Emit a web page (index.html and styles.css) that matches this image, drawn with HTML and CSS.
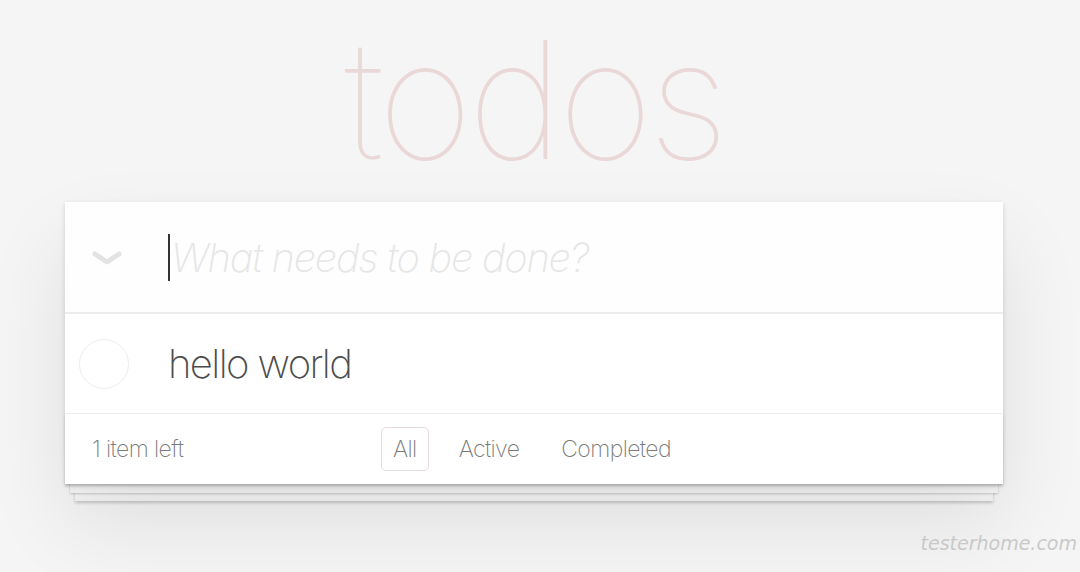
FILE: index.html
```html
<!DOCTYPE html>
<html lang="en">
<head>
  <meta charset="UTF-8">
  <meta name="viewport" content="width=device-width, initial-scale=1.0">
  <title>TodoMVC</title>
  <link rel="stylesheet" href="styles.css">
</head>
<body>
  <section class="todoapp">
    <h1>todos</h1>
    <div class="main">
      <header class="header">
        <span class="toggle-all">
          <svg width="30" height="16" viewBox="0 0 30 16">
            <polyline points="3,4 15,12 27,4" fill="none" stroke="#e3e3e3" stroke-width="5" stroke-linecap="round" stroke-linejoin="round"/>
          </svg>
        </span>
        <div class="new-todo">
          <span class="caret"></span>
          <span class="placeholder">What needs to be done?</span>
        </div>
      </header>

      <ul class="todo-list">
        <li>
          <span class="toggle"></span>
          <label>hello world</label>
        </li>
      </ul>

      <footer class="footer">
        <span class="todo-count">1 item left</span>
        <ul class="filters">
          <li><a class="selected" href="#/">All</a></li>
          <li><a href="#/active">Active</a></li>
          <li><a href="#/completed">Completed</a></li>
        </ul>
      </footer>
    </div>
  </section>

  <div class="watermark">testerhome.com</div>
</body>
</html>
```

FILE: styles.css
```css
html,
body {
  margin: 0;
  padding: 0;
}

body {
  font-family: "Inter", "Helvetica Neue", "Liberation Sans", sans-serif;
  font-weight: 200;
  background-color: #f5f5f5;
  color: #4d4d4d;
  height: 572px;
  overflow: hidden;
  position: relative;
}

.todoapp {
  width: 938px;
  margin-left: 65px;
}

h1 {
  margin: 0;
  padding-bottom: 3px;
  text-align: center;
  font-size: 164px;
  font-weight: 100;
  line-height: 199px;
  letter-spacing: -5px;
  color: rgba(175, 47, 47, 0.15);
}

.main {
  background: #fff;
  box-shadow: 0 2px 5px rgba(0, 0, 0, 0.14), 0 40px 80px rgba(0, 0, 0, 0.09);
}

.header {
  display: flex;
  align-items: center;
  height: 110px;
  border-bottom: 2px solid #ececec;
  background: rgba(0, 0, 0, 0.003);
}

.toggle-all {
  width: 103px;
  display: flex;
  padding-left: 27px;
  box-sizing: border-box;
  margin-top: 2px;
}

.new-todo {
  display: flex;
  align-items: center;
  font-size: 40px;
  font-style: italic;
  font-weight: 200;
}

.caret {
  width: 2px;
  height: 47px;
  background: #333;
  margin-right: 1px;
}

.placeholder {
  color: #e6e6e6;
  letter-spacing: -1.3px;
}

.todo-list {
  margin: 0;
  padding: 0;
  list-style: none;
}

.todo-list li {
  display: flex;
  align-items: center;
  height: 99px;
  border-bottom: 1px solid #ededed;
}

.toggle {
  width: 50px;
  height: 50px;
  margin-left: 14px;
  border: 1px solid #ededed;
  border-radius: 50%;
  box-sizing: border-box;
}

.todo-list label {
  margin-left: 39px;
  font-size: 40px;
  color: #4d4d4d;
  letter-spacing: -1.6px;
}

.footer {
  position: relative;
  display: flex;
  align-items: center;
  height: 70px;
  padding: 0 27px;
  color: #7a7a7a;
  font-size: 23px;
  letter-spacing: -0.6px;
}

.footer::before {
  content: '';
  position: absolute;
  right: 0;
  bottom: 0;
  left: 0;
  height: 70px;
  z-index: -1;
  box-shadow: 0 2px 2px rgba(0, 0, 0, 0.16),
              0 14px 0 -5px #f6f6f6,
              0 15px 2px -5px rgba(0, 0, 0, 0.2),
              0 27px 0 -10px #f6f6f6,
              0 29px 3px -10px rgba(0, 0, 0, 0.2);
}

.todo-count {
  width: 289px;
}

.filters {
  display: flex;
  gap: 18px;
  margin: 0;
  padding: 0;
  list-style: none;
}

.filters a {
  display: block;
  padding: 7px 11px;
  border: 1px solid transparent;
  border-radius: 5px;
  color: #7a7a7a;
  text-decoration: none;
}

.filters a.selected {
  border-color: #e6dcdc;
}

.watermark {
  position: absolute;
  right: 3px;
  bottom: 18px;
  font-family: "DejaVu Sans", sans-serif;
  font-size: 19px;
  font-weight: 200;
  font-style: italic;
  color: #c9c9c9;
}
```
